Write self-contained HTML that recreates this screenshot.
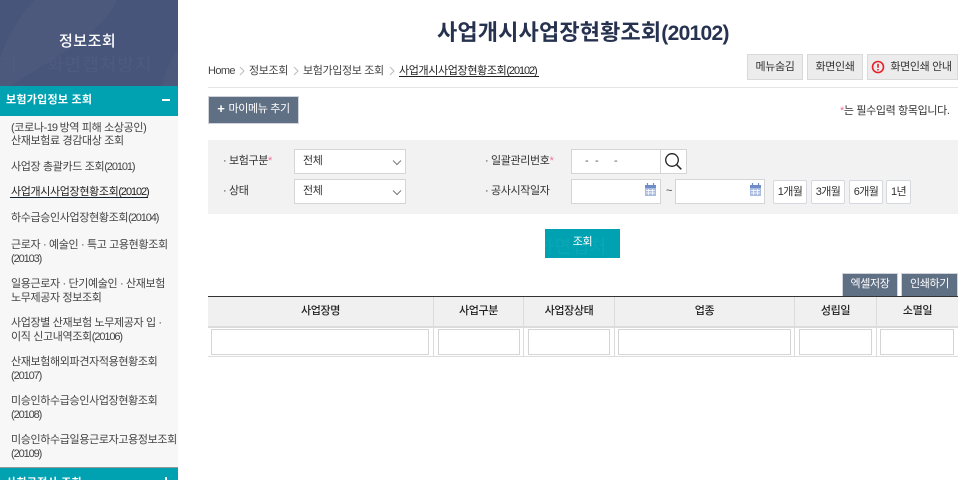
<!DOCTYPE html>
<html lang="ko"><head><meta charset="utf-8"><title>사업개시사업장현황조회</title>
<style>
*{box-sizing:border-box;margin:0;padding:0}
html,body{width:973px;height:480px;overflow:hidden;background:#fff}
body{position:relative;font-family:"Liberation Sans","Noto Sans CJK KR",sans-serif;font-size:11px;color:#333;letter-spacing:-.36px}
.a{position:absolute;white-space:nowrap}
.n{letter-spacing:-1.1px}
.box{position:absolute;background:#fff;border:1px solid #d5d5d5}
.m{position:absolute;left:11px;line-height:13px;color:#444;white-space:nowrap}
.gb{position:absolute;background:#ececec;border:1px solid #d9d9d9;text-align:center;line-height:24px;color:#333}
.db{position:absolute;background:#5f6f84;border:1px solid #d0d4da;color:#fff;text-align:center}
.lb{position:absolute;white-space:nowrap;color:#333;line-height:14px}
.r{color:#f0709a}
.pb{position:absolute;top:180px;height:24px;background:#fff;border:1px solid #d5d9de;border-radius:2px;text-align:center;line-height:22px;color:#333;letter-spacing:-.6px}
.th{position:absolute;top:297px;height:29px;background:#f0f0f0;border-right:1px solid #dcdcdc;text-align:center;line-height:28px;font-weight:500;color:#222;font-size:11px}
.sel{font-size:11px;line-height:23px;padding-left:8px;color:#333}
.wm{position:absolute;white-space:nowrap;top:55px;font-size:18px;line-height:20px;color:#4e5b7f;letter-spacing:1px}
</style></head><body>

<div class="a" style="left:0;top:0;width:178px;height:86px;background:#47557a;overflow:hidden">
<svg width="178" height="86" style="position:absolute;left:0;top:0"><path d="M35 0H117C105 30 60 55 10 86H0V58C8 35 20 15 35 0Z" fill="#4c597d"/><path d="M178 50C170 60 165 72 162 86H178Z" fill="#4c597d"/></svg>
<div class="wm" style="left:47px">화면캡처방지</div>
<div class="wm" style="left:-17px">방지</div>
<div class="wm" style="left:175px">화면</div>
<div class="a" style="left:59px;top:30px;font-size:15px;color:#fff;font-weight:500;letter-spacing:.5px">정보조회</div>
</div>
<div class="a" style="left:0;top:86px;width:178px;height:30px;background:#00a2b2"></div>
<div class="a" style="left:6px;top:92px;font-size:11px;font-weight:bold;color:#fff;letter-spacing:.25px;line-height:16px">보험가입정보 조회</div>
<div class="a" style="left:162px;top:99px;width:8px;height:2px;background:#fff"></div>
<div class="a" style="left:0;top:116px;width:178px;height:351px;background:#f7f7f7"></div>
<div class="m" style="top:122px">(코로나-<span class="n">19</span> 방역 피해 소상공인)<br>산재보험료 경감대상 조회</div>
<div class="m" style="top:161px">사업장 총괄카드 조회<span class="n">(20101)</span></div>
<div class="m" style="top:186px;color:#222;border-bottom:1px solid #123;left:10px;padding-left:1px;height:12px;line-height:12px;width:138px">사업개시사업장현황조회<span class="n">(20102)</span></div>
<div class="m" style="top:212px">하수급승인사업장현황조회<span class="n">(20104)</span></div>
<div class="m" style="top:238px;line-height:14px">근로자 · 예술인 · 특고 고용현황조회<br><span class="n">(20103)</span></div>
<div class="m" style="top:277px;line-height:14px">일용근로자 · 단기예술인 · 산재보험<br>노무제공자 정보조회</div>
<div class="m" style="top:316px;line-height:14px">사업장별 산재보험 노무제공자 입 ·<br>이직 신고내역조회<span class="n">(20106)</span></div>
<div class="m" style="top:355px;line-height:14px">산재보험해외파견자적용현황조회<br><span class="n">(20107)</span></div>
<div class="m" style="top:394px;line-height:14px">미승인하수급승인사업장현황조회<br><span class="n">(20108)</span></div>
<div class="m" style="top:433px;line-height:14px">미승인하수급일용근로자고용정보조회<br><span class="n">(20109)</span></div>
<div class="a" style="left:0;top:467px;width:178px;height:13px;background:#00a2b2;border-top:1px solid #999"></div>
<div class="a" style="left:6px;top:475px;font-size:11px;font-weight:bold;color:#fff;letter-spacing:.25px;line-height:16px">사회공적사 조회</div>
<div class="a" style="left:165px;top:477px;width:2px;height:3px;background:#fff"></div>

<div class="a" style="left:437px;top:18px;font-family:'Liberation Sans','Noto Sans CJK KR',sans-serif;font-size:22px;font-weight:bold;color:#26324f;letter-spacing:.15px;line-height:30px">사업개시사업장현황조회<span style="font-size:21px;letter-spacing:-.7px">(20102)</span></div>

<div class="a" style="left:208px;top:64px;line-height:14px;color:#444;letter-spacing:-.6px">Home</div>
<div class="a" style="left:249px;top:64px;line-height:14px;color:#444">정보조회</div>
<div class="a" style="left:303px;top:64px;line-height:14px;color:#444">보험가입정보 조회</div>
<div class="a" style="left:399px;top:64px;line-height:14px;color:#222;border-bottom:1px solid #222;height:13px;width:140px">사업개시사업장현황조회<span class="n">(20102)</span></div>
<svg class="a" style="left:238px;top:66px" width="8" height="10"><path d="M2 1l4 4-4 4" fill="none" stroke="#bbb" stroke-width="1"/></svg>
<svg class="a" style="left:292px;top:66px" width="8" height="10"><path d="M2 1l4 4-4 4" fill="none" stroke="#bbb" stroke-width="1"/></svg>
<svg class="a" style="left:388px;top:66px" width="8" height="10"><path d="M2 1l4 4-4 4" fill="none" stroke="#bbb" stroke-width="1"/></svg>

<div class="gb" style="left:747px;top:54px;width:56px;height:26px">메뉴숨김</div>
<div class="gb" style="left:807px;top:54px;width:56px;height:26px">화면인쇄</div>
<div class="gb" style="left:867px;top:54px;width:91px;height:26px;padding-left:17px">화면인쇄 안내</div>
<svg class="a" style="left:871px;top:60px" width="14" height="14"><circle cx="7" cy="7" r="5.5" fill="none" stroke="#e8202a" stroke-width="1.6"/><path d="M7 3.8v4" stroke="#e8202a" stroke-width="1.6"/><path d="M7 9v1.4" stroke="#e8202a" stroke-width="1.6"/></svg>
<div class="a" style="left:208px;top:87px;width:750px;height:1px;background:#e5e5e5"></div>

<div class="db" style="left:208px;top:96px;width:91px;height:28px;line-height:24px;color:#fff"><span style="font-size:13px;font-weight:bold;margin-right:4px;vertical-align:-1px">+</span>마이메뉴 추기</div>
<div class="a" style="left:840px;top:104px;line-height:14px;color:#333"><span class="r">*</span>는 필수입력 항목입니다.</div>

<div class="a" style="left:208px;top:140px;width:750px;height:74px;background:#f2f2f2"></div>
<div class="lb" style="left:223px;top:154px">·&nbsp;보험구분<span class="r">*</span></div>
<div class="lb" style="left:223px;top:184px">·&nbsp;상태</div>
<div class="box sel" style="left:294px;top:149px;width:112px;height:25px">전체</div>
<div class="box sel" style="left:294px;top:179px;width:112px;height:25px">전체</div>
<svg class="a" style="left:392px;top:159px" width="10" height="8"><path d="M1 1.5l4 4 4-4" fill="none" stroke="#777" stroke-width="1"/></svg>
<svg class="a" style="left:392px;top:189px" width="10" height="8"><path d="M1 1.5l4 4 4-4" fill="none" stroke="#777" stroke-width="1"/></svg>

<div class="lb" style="left:485px;top:154px">·&nbsp;일괄관리번호<span class="r">*</span></div>
<div class="lb" style="left:485px;top:184px">·&nbsp;공사시작일자</div>
<div class="box" style="left:571px;top:149px;width:90px;height:25px"></div>
<div class="a" style="left:585px;top:154px;line-height:14px;color:#555">-</div>
<div class="a" style="left:595px;top:154px;line-height:14px;color:#555">-</div>
<div class="a" style="left:614px;top:154px;line-height:14px;color:#555">-</div>
<div class="box" style="left:660px;top:149px;width:27px;height:25px"></div>
<svg class="a" style="left:663px;top:152px" width="20" height="20"><circle cx="9" cy="8" r="6.3" fill="none" stroke="#222" stroke-width="1.3"/><path d="M13.5 12.5l4.8 4.8" stroke="#222" stroke-width="1.5"/></svg>
<div class="box" style="left:571px;top:179px;width:90px;height:25px"></div>
<div class="a" style="left:666px;top:184px;line-height:14px;color:#444">~</div>
<div class="box" style="left:675px;top:179px;width:90px;height:25px"></div>
<svg class="a" style="left:644px;top:183px" width="13" height="14"><rect x="1" y="2" width="11" height="11" fill="#a9bce0"/><rect x="1" y="2" width="11" height="3" fill="#6f8cc8"/><path d="M3.5 0v3M9.5 0v3" stroke="#6f8cc8" stroke-width="1.2"/><path d="M2 7.5h9M2 10h9M4.5 6v6M8.5 6v6" stroke="#fff" stroke-width=".7"/></svg>
<svg class="a" style="left:749px;top:183px" width="13" height="14"><rect x="1" y="2" width="11" height="11" fill="#a9bce0"/><rect x="1" y="2" width="11" height="3" fill="#6f8cc8"/><path d="M3.5 0v3M9.5 0v3" stroke="#6f8cc8" stroke-width="1.2"/><path d="M2 7.5h9M2 10h9M4.5 6v6M8.5 6v6" stroke="#fff" stroke-width=".7"/></svg>
<div class="pb" style="left:773px;width:34px">1개월</div>
<div class="pb" style="left:811px;width:34px">3개월</div>
<div class="pb" style="left:849px;width:34px">6개월</div>
<div class="pb" style="left:886px;width:25px">1년</div>

<div class="a" style="left:545px;top:229px;width:75px;height:29px;background:#00a2b2;overflow:hidden">
<div class="a" style="left:-8px;top:8px;font-size:18px;line-height:20px;letter-spacing:1px;color:#0ba6b5">화면캡처</div>
<div class="a" style="left:0;top:0;width:75px;color:#fff;text-align:center;line-height:27px">조회</div>
</div>

<div class="db" style="left:842px;top:273px;width:56px;height:23px;line-height:20px;border-bottom:0">엑셀저장</div>
<div class="db" style="left:901px;top:273px;width:57px;height:23px;line-height:20px;border-bottom:0">인쇄하기</div>

<div class="a" style="left:208px;top:296px;width:750px;height:1px;background:#333"></div>
<div class="th" style="left:208px;width:226px">사업장명</div>
<div class="th" style="left:434px;width:90px">사업구분</div>
<div class="th" style="left:524px;width:91px">사업장상태</div>
<div class="th" style="left:615px;width:180px">업종</div>
<div class="th" style="left:795px;width:82px">성립일</div>
<div class="th" style="left:877px;width:81px;border-right:0">소멸일</div>
<div class="a" style="left:208px;top:326px;width:750px;height:2px;background:#dcdcdc"></div>
<div class="a" style="left:208px;top:356px;width:750px;height:1px;background:#dcdcdc"></div>
<div class="a" style="left:433px;top:328px;width:1px;height:28px;background:#dcdcdc"></div>
<div class="a" style="left:523px;top:328px;width:1px;height:28px;background:#dcdcdc"></div>
<div class="a" style="left:614px;top:328px;width:1px;height:28px;background:#dcdcdc"></div>
<div class="a" style="left:794px;top:328px;width:1px;height:28px;background:#dcdcdc"></div>
<div class="a" style="left:876px;top:328px;width:1px;height:28px;background:#dcdcdc"></div>
<div class="box" style="left:211px;top:329px;width:218px;height:26px"></div>
<div class="box" style="left:438px;top:329px;width:82px;height:26px"></div>
<div class="box" style="left:528px;top:329px;width:82px;height:26px"></div>
<div class="box" style="left:618px;top:329px;width:173px;height:26px"></div>
<div class="box" style="left:799px;top:329px;width:73px;height:26px"></div>
<div class="box" style="left:880px;top:329px;width:74px;height:26px"></div>
</body></html>
